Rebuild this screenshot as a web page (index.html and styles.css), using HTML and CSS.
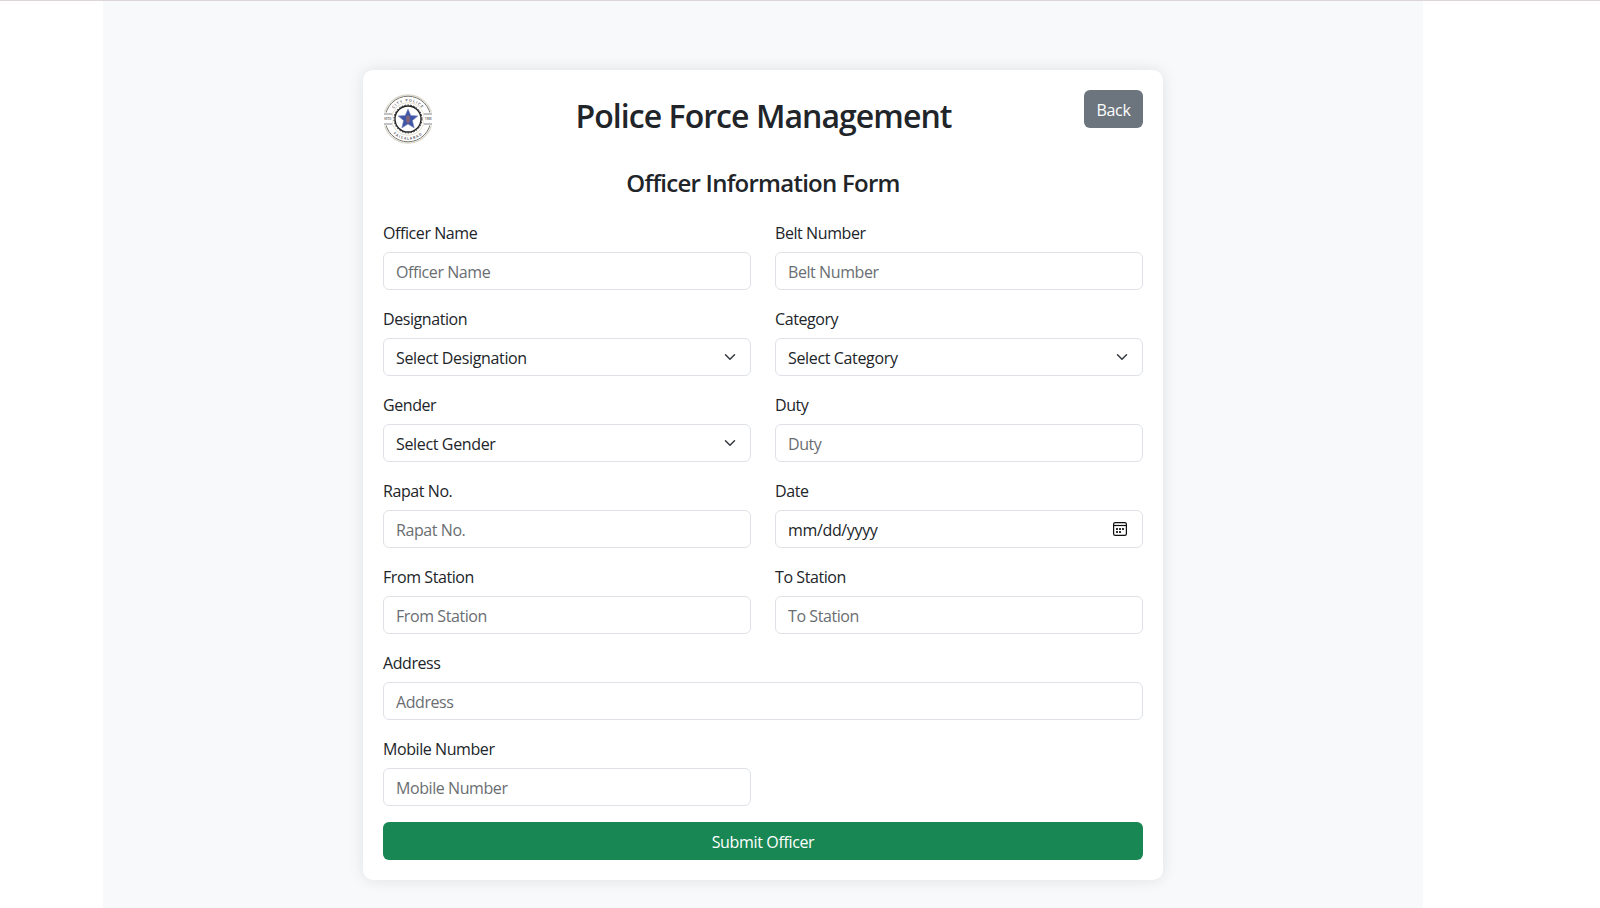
FILE: index.html
```html
<!DOCTYPE html>
<html lang="en">
<head>
<meta charset="utf-8">
<title>Police Force Management</title>
<link rel="stylesheet" href="styles.css">
</head>
<body>
<div class="container">
  <main class="card">
    <header class="card-header">
      <svg class="logo" viewBox="0 0 50 50" role="img" aria-label="City Police">
        <defs>
          <path id="arc-top" d="M7.500 25a17.500 17.500 0 0 1 35 0"/>
          <path id="arc-bottom" d="M4.200 25a20.800 20.800 0 0 0 41.600 0"/>
        </defs>
        <circle cx="25" cy="25" r="24.2" fill="none" stroke="#d9d6c9" stroke-width="1.2"/>
        <circle cx="25" cy="25" r="22.8" fill="none" stroke="#77766f" stroke-width="1"/>
        <circle cx="25" cy="25" r="16.400" fill="none" stroke="#d8d2b8" stroke-width=".7"/>
        <path d="M0 18.500h9v13H0zM41 18.500h9v13h-9z" fill="#fff"/>
        <path d="M1 20h8M1 30h8M41 20h8M41 30h8" stroke="#77777b" stroke-width=".9"/>
        <circle cx="25" cy="25" r="13" fill="none" stroke="#222" stroke-width="1.3"/>
        <circle cx="25" cy="25" r="14" fill="none" stroke="#222" stroke-width="1" stroke-dasharray="1.6 1.35"/>
        <path d="M25 15l2.800 6.500 7 .5-5.400 4.600 1.800 7.300-6.200-3.900-6.200 3.900 1.800-7.300-5.400-4.600 7-.5z" fill="#3f55a5" stroke="#7483bd" stroke-width=".6"/>
        <path d="M25 21l2 1.800v4.700L25 29.800l-2-2.300v-4.700z" fill="#7b6380"/>
        <g class="logo-text">
          <text><textPath href="#arc-top" startOffset="50%" text-anchor="middle">CITY POLICE</textPath></text>
          <text><textPath href="#arc-bottom" startOffset="50%" text-anchor="middle">FAISALABAD</textPath></text>
        </g>
        <text class="logo-year" x="4.800" y="26.100" text-anchor="middle">ESTD</text>
        <text class="logo-year" x="45.200" y="26.100" text-anchor="middle">1985</text>
      </svg>
      <h2 class="title">Police Force Management</h2>
      <button class="btn btn-secondary" type="button">Back</button>
    </header>
    <h4 class="subtitle">Officer Information Form</h4>
    <form class="form">
      <label class="field"><span class="label">Officer Name</span><input class="control" type="text" placeholder="Officer Name"></label>
      <label class="field"><span class="label">Belt Number</span><input class="control" type="text" placeholder="Belt Number"></label>
      <label class="field"><span class="label">Designation</span>
        <span class="control select">Select Designation<svg class="caret" viewBox="0 0 16 16"><path d="m2 5 6 6 6-6"/></svg></span></label>
      <label class="field"><span class="label">Category</span>
        <span class="control select">Select Category<svg class="caret" viewBox="0 0 16 16"><path d="m2 5 6 6 6-6"/></svg></span></label>
      <label class="field"><span class="label">Gender</span>
        <span class="control select">Select Gender<svg class="caret" viewBox="0 0 16 16"><path d="m2 5 6 6 6-6"/></svg></span></label>
      <label class="field"><span class="label">Duty</span><input class="control" type="text" placeholder="Duty"></label>
      <label class="field"><span class="label">Rapat No.</span><input class="control" type="text" placeholder="Rapat No."></label>
      <label class="field"><span class="label">Date</span>
        <span class="control date">mm/dd/yyyy<svg class="calendar" viewBox="0 0 14 14"><rect x=".6" y=".6" width="12.800" height="12.800" rx="1.600"/><path d="M.5 3.500h13"/><path class="days" d="M3 7h2M6 7h2M9 7h2M3 10h2M6 10h2"/></svg></span></label>
      <label class="field"><span class="label">From Station</span><input class="control" type="text" placeholder="From Station"></label>
      <label class="field"><span class="label">To Station</span><input class="control" type="text" placeholder="To Station"></label>
      <label class="field field-wide"><span class="label">Address</span><input class="control" type="text" placeholder="Address"></label>
      <label class="field"><span class="label">Mobile Number</span><input class="control" type="text" placeholder="Mobile Number"></label>
      <button class="btn btn-success field-wide" type="button">Submit Officer</button>
    </form>
  </main>
</div>
</body>
</html>
```
FILE: styles.css
```css
* { box-sizing: border-box; }
body {
  margin: 0;
  height: 908px;
  overflow: hidden;
  border-top: 1px solid #dcd6d9;
  background: #fff;
  color: #212529;
  font: 400 16px/24px "Open Sans", "Noto Sans", sans-serif;
  letter-spacing: -0.42px;
}
.container {
  width: 1320px;
  height: 907px;
  margin-left: 103px;
  padding-top: 69px;
  background: #f8f9fa;
}
.card {
  width: 800px;
  height: 810px;
  margin: 0 auto;
  padding: 20px;
  border-radius: 10px;
  background: #fff;
  box-shadow: 0 0 15px rgba(0, 0, 0, 0.1);
}
.card-header {
  display: grid;
  grid-template-columns: 50px 1fr 59px;
  align-items: start;
  height: 62px;
}
.logo { width: 50px; height: 50px; margin-top: 4px; }
.logo-text { font-size: 3.6px; font-weight: 600; letter-spacing: 1.1px; fill: #44444a; }
.logo-year { font-size: 3px; font-weight: 600; letter-spacing: 0; fill: #555; }
.title {
  margin: 7px 0 0;
  padding-left: 10px;
  text-align: center;
  white-space: nowrap;
  font-size: 32px;
  font-weight: 600;
  line-height: 38px;
  letter-spacing: -0.95px;
}
.subtitle {
  margin: 16px 0 23px;
  text-align: center;
  font-size: 24px;
  font-weight: 600;
  line-height: 29px;
  letter-spacing: -0.75px;
}
.btn {
  height: 38px;
  padding: 1px 12px 0;
  border: 0;
  border-radius: 6px;
  color: #fff;
  font: inherit;
  letter-spacing: -0.35px;
}
.btn-secondary { background: #6c757d; }
.btn-success { background: #198754; }
.form {
  display: grid;
  grid-template-columns: 368px 368px;
  gap: 16px 24px;
}
.field { display: flex; flex-direction: column; gap: 8px; }
.field-wide { grid-column: 1 / -1; }
.label { height: 24px; padding-top: 1px; }
.control {
  width: 100%;
  height: 38px;
  padding: 7px 12px 5px;
  border: 1px solid #dee2e6;
  border-radius: 6px;
  background: #fff;
  color: #212529;
  font: inherit;
  letter-spacing: inherit;
}
.control::placeholder { color: #6a6e72; opacity: 1; }
.select, .date { display: flex; align-items: center; justify-content: space-between; letter-spacing: -0.35px; }
.caret { width: 16px; height: 12px; margin-top: -2px; fill: none; stroke: #343a40; stroke-width: 2; stroke-linecap: round; stroke-linejoin: round; }
.calendar { width: 14px; height: 14px; margin: -2px 3px 0 0; fill: none; stroke: #111; stroke-width: 1.2; }
.calendar .days { stroke: #333; stroke-width: 1.8; }
```
